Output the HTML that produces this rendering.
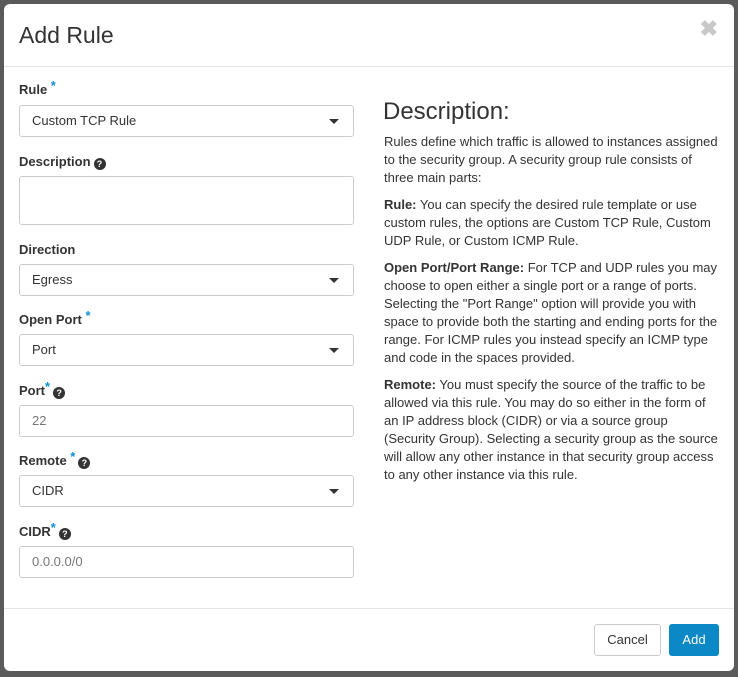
<!DOCTYPE html>
<html><head><style>
body{margin:0;width:738px;height:677px;background:#5b5b5b;font-family:"Liberation Sans",sans-serif;position:relative;overflow:hidden;color:#333}
.m{position:absolute;left:4px;top:4px;width:730px;height:667px;background:#fff;border-radius:6px}
.a{position:absolute}
h1{position:absolute;left:15px;top:18px;margin:0;font-size:23px;font-weight:normal;color:#333}
.hr{position:absolute;left:0;width:730px;height:1px;background:#e5e5e5}
.lab{position:absolute;left:15px;font-size:13px;font-weight:bold;color:#333}
.st{color:#0d8fd1;font-size:13px;vertical-align:top;position:relative;top:-4px}
.q{display:inline-block;width:12px;height:12px;border-radius:50%;background:#333;color:#fff;font-size:9px;line-height:12px;text-align:center;vertical-align:-1px;margin-left:3px}
.in{position:absolute;left:15px;height:30px;border:1px solid #ccc;border-radius:3px;font-size:13px;line-height:30px;padding-left:12px;box-sizing:content-box;width:321px}
.car{position:absolute;right:14px;top:13px;border-left:5px solid transparent;border-right:5px solid transparent;border-top:5px solid #333}
.d{position:absolute;left:380px;width:336px;font-size:13px;line-height:18px;color:#333}
.d p{margin:0 0 9px}
</style></head><body>
<div class="m">
<h1>Add Rule</h1>
<div class="a" style="right:16px;top:12px;font-size:22px;color:#c8c8c8;font-weight:bold">✖</div>
<div class="hr" style="top:62px"></div>
<div class="lab" style="top:78px">Rule <span class="st">*</span></div>
<div class="in" style="top:101px">Custom TCP Rule<div class="car"></div></div>
<div class="lab" style="top:150px">Description<span class="q">?</span></div>
<div class="in" style="top:172px;height:47px;line-height:20px"></div>
<div class="lab" style="top:238px">Direction</div>
<div class="in" style="top:260px">Egress<div class="car"></div></div>
<div class="lab" style="top:308px">Open Port <span class="st">*</span></div>
<div class="in" style="top:330px">Port<div class="car"></div></div>
<div class="lab" style="top:379px">Port<span class="st">*</span><span class="q">?</span></div>
<div class="in" style="top:401px;color:#777">22</div>
<div class="lab" style="top:449px">Remote <span class="st">*</span><span class="q">?</span></div>
<div class="in" style="top:471px">CIDR<div class="car"></div></div>
<div class="lab" style="top:520px">CIDR<span class="st">*</span><span class="q">?</span></div>
<div class="in" style="top:542px;color:#777">0.0.0.0/0</div>
<div class="a" style="left:379px;top:94px;font-size:24px;color:#333">Description:</div>
<div class="d" style="top:129px">
<p>Rules define which traffic is allowed to instances assigned to the security group. A security group rule consists of three main parts:</p>
<p><b>Rule:</b> You can specify the desired rule template or use custom rules, the options are Custom TCP Rule, Custom UDP Rule, or Custom ICMP Rule.</p>
<p><b>Open Port/Port Range:</b> For TCP and UDP rules you may choose to open either a single port or a range of ports. Selecting the "Port Range" option will provide you with space to provide both the starting and ending ports for the range. For ICMP rules you instead specify an ICMP type and code in the spaces provided.</p>
<p><b>Remote:</b> You must specify the source of the traffic to be allowed via this rule. You may do so either in the form of an IP address block (CIDR) or via a source group (Security Group). Selecting a security group as the source will allow any other instance in that security group access to any other instance via this rule.</p>
</div>
<div class="hr" style="top:604px"></div>
<div class="a" style="left:590px;top:620px;width:65px;height:30px;border:1px solid #ccc;border-radius:3px;font-size:13px;line-height:30px;text-align:center">Cancel</div>
<div class="a" style="left:665px;top:620px;width:50px;height:32px;background:#0b88c6;border-radius:3px;font-size:13px;line-height:32px;text-align:center;color:#fff">Add</div>
</div>
</body></html>
